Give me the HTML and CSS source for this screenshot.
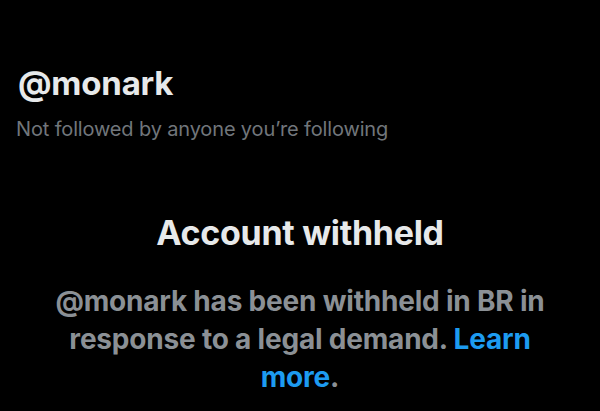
FILE: index.html
```html
<!DOCTYPE html>
<html lang="en">
<head>
    <meta charset="UTF-8">
    <meta name="viewport" content="width=device-width, initial-scale=1.0">
    <title>@monark</title>
    <link rel="stylesheet" href="styles.css">
</head>
<body>
    <div class="profile">
        <div class="handle">@monark</div>
        <div class="followers">Not followed by anyone you’re following</div>
    </div>
    <div class="withheld">
        <h2>Account withheld</h2>
        <p>@monark has been withheld in BR in response to a legal demand. <a href="#">Learn more</a>.</p>
    </div>
</body>
</html>
```

FILE: styles.css
```css
body {
    margin: 0;
    background: #000;
    font-family: Inter, 'Noto Sans', sans-serif;
    height: 411px;
    overflow: hidden;
}

.profile {
    padding: 63px 0 0 18px;
}

.handle {
    color: #e7e9ea;
    font-size: 33px;
    font-weight: 700;
    line-height: 40px;
    letter-spacing: -0.2px;
}

.followers {
    color: #71767b;
    font-size: 20px;
    line-height: 24px;
    margin-top: 14px;
    margin-left: -2px;
    letter-spacing: -0.15px;
}

.withheld {
    text-align: center;
    padding: 0 45px;
    margin-top: 72px;
}

.withheld h2 {
    color: #e7e9ea;
    font-size: 34px;
    font-weight: 700;
    line-height: 40px;
    margin: 0;
    letter-spacing: -0.3px;
}

.withheld p {
    color: #8b9095;
    font-size: 28px;
    font-weight: 700;
    line-height: 38px;
    margin: 29px 0 0;
    letter-spacing: -0.2px;
}

a {
    color: #1d9bf0;
    text-decoration: none;
}
```
